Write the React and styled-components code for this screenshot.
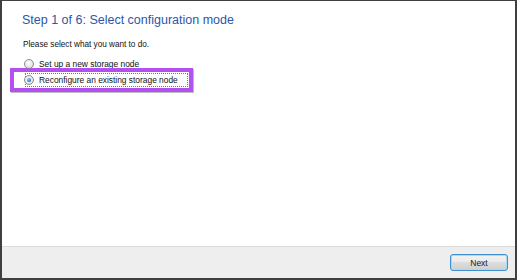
import React from "react";
import styled, { createGlobalStyle } from "styled-components";

const GlobalStyle = createGlobalStyle`
  html, body {
    margin: 0;
    padding: 0;
    background: #ffffff;
  }
  #root {
    width: 517px;
    height: 280px;
  }
`;

export default function App() {
  return (
    <>
      <GlobalStyle />
      <Frame>
        <Content>
          <Title>Step 1 of 6: Select configuration mode</Title>
          <Prompt>Please select what you want to do.</Prompt>
          <Options>
            <Option>
              <Radio />
              <Label>Set up a new storage node</Label>
            </Option>
            <Highlight>
              <Option focused>
                <Radio checked />
                <Label>Reconfigure an existing storage node</Label>
              </Option>
            </Highlight>
          </Options>
        </Content>
        <Footer>
          <Button>Next</Button>
        </Footer>
      </Frame>
    </>
  );
}

const Frame = styled.div`
  box-sizing: border-box;
  width: 517px;
  height: 280px;
  border-style: solid;
  border-color: #3f3f3f;
  border-width: 1px 2px 2px 2px;
  display: flex;
  flex-direction: column;
  font-family: "Liberation Sans", Arial, sans-serif;
`;

const Content = styled.div`
  flex: 1;
  background: #ffffff;
  padding: 9px 0 0 19px;
`;

const Title = styled.div`
  color: #2a57a8;
  font-size: 12.5px;
  line-height: 20px;
  margin-left: 1px;
`;

const Prompt = styled.div`
  margin-top: 9px;
  margin-left: 2px;
  font-size: 8.2px;
  line-height: 11px;
  color: #111;
`;

const Options = styled.div`
  margin-top: 5px;
  display: flex;
  flex-direction: column;
  align-items: flex-start;
`;

const Option = styled.div`
  display: flex;
  align-items: center;
  gap: 5px;
  height: ${(p) => (p.focused ? "16px" : "18px")};
  padding-right: ${(p) => (p.focused ? "2px" : "0")};
  margin-left: ${(p) => (p.focused ? "1px" : "3px")};
  outline: ${(p) => (p.focused ? "1px dotted #777" : "none")};
  outline-offset: -2px;
`;

const Highlight = styled.div`
  box-sizing: border-box;
  width: 183px;
  margin: -5px 0 0 -11px;
  padding: 0 0 0 9px;
  border: 4px solid #b44ff0;
  box-shadow: 1px 1px 0 #bdbdbd;
`;

const Radio = styled.span`
  box-sizing: border-box;
  width: 10px;
  height: 10px;
  border-radius: 50%;
  border: 1px solid #8c8c8c;
  background: radial-gradient(circle at 40% 35%, #ffffff 0%, #e6e6e6 60%, #cfcfcf 100%);
  position: relative;
  flex-shrink: 0;
  &::after {
    content: "";
    display: ${(p) => (p.checked ? "block" : "none")};
    position: absolute;
    left: 2px;
    top: 2px;
    width: 4px;
    height: 4px;
    border-radius: 50%;
    background: radial-gradient(circle at 40% 35%, #8fd0ff 0%, #1f6fbf 70%, #0f3f7f 100%);
  }
`;

const Label = styled.span`
  font-size: 8.4px;
  line-height: 11px;
  color: #111;
`;

const Footer = styled.div`
  height: 32px;
  background: #eeeeee;
  border-top: 1px solid #dcdcdc;
  box-sizing: border-box;
  display: flex;
  align-items: center;
  justify-content: flex-end;
  padding-right: 7px;
`;

const Button = styled.button`
  width: 58px;
  height: 17px;
  padding: 0;
  border: 1px solid #3d8fd0;
  border-radius: 3px;
  background: linear-gradient(#f2f2f2 0%, #ebebeb 45%, #dddddd 50%, #cfcfcf 100%);
  box-shadow: inset 0 0 0 1px #a8dcf5;
  font-family: "Liberation Sans", Arial, sans-serif;
  font-size: 8.5px;
  color: #1a1a1a;
`;
